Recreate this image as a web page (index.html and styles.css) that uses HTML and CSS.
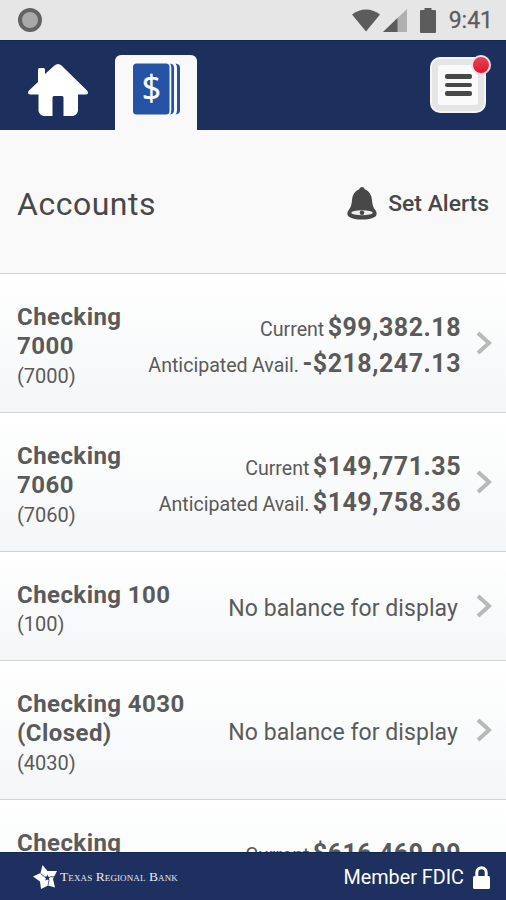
FILE: index.html
```
<!DOCTYPE html>
<html lang="en">

<head>
    <meta charset="UTF-8">
    <meta name="viewport" content="width=device-width, initial-scale=1.0">
    <title>Accounts</title>
    <link rel="stylesheet" href="styles.css">
</head>

<body>
    <div class="phone">
        <!-- status bar -->
        <div class="statusBar">
            <span class="recDot"></span>
            <div class="statusIcons">
                <svg class="wifi" width="30" height="23" viewBox="0 0 30 23"><path d="M1 5.500Q15-4.500 29 5.500L15 22.500z" fill="#5c5c5c"/></svg>
                <svg class="signal" width="24" height="24" viewBox="0 0 24 24"><path d="M0 24L24 1v23z" fill="#b0b0b0"/><path d="M0 24L14.500 10v14z" fill="#5c5c5c"/></svg>
                <svg class="battery" width="16" height="25" viewBox="0 0 16 25"><path d="M4.500 0h7v2H15a1 1 0 0 1 1 1v21a1 1 0 0 1-1 1H1a1 1 0 0 1-1-1V3a1 1 0 0 1 1-1h3.500z" fill="#5c5c5c"/></svg>
                <span class="clock">9:41</span>
            </div>
        </div>

        <!-- tabs -->
        <header class="topNav">
            <a class="homeTab" href="#">
                <svg width="60" height="53" viewBox="0 0 60 53"><path fill="#fff" d="M10 5.500q0-1.500 1.500-1.500h4q1.500 0 1.500 1.500V10L26.500 1.500Q30-1.500 33.500 1.500L59 26.500Q61.500 30 58 30.500H50V47q-1 4-5 5H35.500V33.500q0-1.500-1.500-1.500H26q-1.500 0-1.500 1.500V52H15.500q-4-1-5-5V30.500H2Q-1.500 30 1 26.500L10 18z"/></svg>
            </a>
            <a class="accountTab" href="#">
                <svg width="48" height="52" viewBox="0 0 48 52">
                    <rect x="0" y="0.500" width="36.500" height="51" rx="3.500" fill="#2453a6"/>
                    <path d="M37 0.500Q41 1 41 4.500v43Q41 51 37 51.500Q38.300 50 38.300 47V5Q38.300 2 37 .500zM42.500 0.500Q47 1 47 4.500v43Q47 51 42.500 51.500Q44 50 44 47V5Q44 2 42.500 .500z" fill="#2453a6"/>
                    <text x="18.500" y="37" text-anchor="middle" class="dollar">$</text>
                </svg>
            </a>
            <button class="menuBtn">
                <span class="menuFace"><i></i><i></i><i></i></span>
                <span class="badge"></span>
            </button>
        </header>

        <div class="titleBar">
            <h1>Accounts</h1>
            <a class="alerts" href="#">
                <svg width="30" height="33" viewBox="0 0 30 33">
                    <path fill="#484848" d="M15 0c1.600 0 2.500 1 2.600 2.200C22.500 4 24.500 8 25 13c.4 5 1.200 7.500 3.700 10.500C30 25.500 30 28 28.500 29.500 25 32 20 32.500 15 32.500S5 32 1.500 29.500C0 28 0 25.500 1.300 23.500 3.800 20.500 4.600 18 5 13c.5-5 2.500-9 7.400-10.800C12.500 1 13.400 0 15 0z"/>
                    <ellipse cx="15" cy="25.800" rx="10.800" ry="2.500" fill="#eee"/>
                    <circle cx="15" cy="25.800" r="2.300" fill="#484848"/>
                </svg>
                <span>Set Alerts</span>
            </a>
        </div>

        <!-- account list -->
        <main class="accountList">
            <div class="account">
                <div class="accountName"><h2>Checking 7000</h2><p>(7000)</p></div>
                <div class="balance">
                    <p>Current <b>$99,382.18</b></p>
                    <p>Anticipated Avail. <b>-$218,247.13</b></p>
                </div>
                <svg class="arrow" width="16" height="24" viewBox="0 0 16 24"><path d="M2 2L13 12 2 22"/></svg>
            </div>
            <div class="account">
                <div class="accountName"><h2>Checking 7060</h2><p>(7060)</p></div>
                <div class="balance">
                    <p>Current <b>$149,771.35</b></p>
                    <p>Anticipated Avail. <b>$149,758.36</b></p>
                </div>
                <svg class="arrow" width="16" height="24" viewBox="0 0 16 24"><path d="M2 2L13 12 2 22"/></svg>
            </div>
            <div class="account">
                <div class="accountName wide"><h2>Checking 100</h2><p>(100)</p></div>
                <div class="noBalance">No balance for display</div>
                <svg class="arrow" width="16" height="24" viewBox="0 0 16 24"><path d="M2 2L13 12 2 22"/></svg>
            </div>
            <div class="account">
                <div class="accountName wide"><h2>Checking 4030 (Closed)</h2><p>(4030)</p></div>
                <div class="noBalance">No balance for display</div>
                <svg class="arrow" width="16" height="24" viewBox="0 0 16 24"><path d="M2 2L13 12 2 22"/></svg>
            </div>
            <div class="account cutOff">
                <div class="accountName"><h2>Checking</h2></div>
                <div class="balance">
                    <p>Current <b>$616,469.09</b></p>
                </div>
                <span class="arrow"></span>
            </div>
        </main>

        <footer class="bottomBar">
            <div class="bank">
                <svg width="25" height="24" viewBox="0 0 25 24">
                    <path fill="#fff" d="M9.500 0l5 6H24l-4 8 2 8.500-7-2L8 24l-1-7.500L0 11.500 7.500 8z"/>
                    <path fill="#1e305f" d="M14.500 9.500l.8 2.200h2.500l-2 1.600.6 2.500-2-1.400-2.200 1.400.7-2.500-2-1.700h2.700z"/>
                    <path stroke="#1e305f" stroke-width=".8" d="M17.500 11.700h4.500M16 15.500l-1 5M11.500 11.700L7.500 8.500"/>
                </svg>
                <span class="bankName">Texas Regional Bank</span>
            </div>
            <div class="fdic">
                <span>Member FDIC</span>
                <svg width="17" height="23" viewBox="0 0 17 23"><path d="M3.800 11V6.500a4.700 4.700 0 0 1 9.400 0V11" fill="none" stroke="#fff" stroke-width="3"/><rect x="0" y="10" width="17" height="13" rx="1.500" fill="#fff"/></svg>
            </div>
        </footer>
    </div>
</body>

</html>
```
FILE: styles.css
```
* {
    box-sizing: border-box;
}
body {
    margin: 0;
    font-family: Roboto, "Liberation Sans", sans-serif;
    color: #5a5a5a;
}
h1, h2, p {
    margin: 0;
}
a {
    color: inherit;
    text-decoration: none;
}
svg {
    display: block;
}
.phone {
    width: 506px;
    height: 900px;
    display: flex;
    flex-direction: column;
    overflow: hidden;
    background: #f9f9f9;
}
.statusBar {
    height: 40px;
    flex: none;
    display: flex;
    justify-content: space-between;
    align-items: center;
    padding: 0 13px 0 18px;
    background: #e6e6e6;
}
.recDot {
    width: 24px;
    height: 24px;
    border: 4px solid #636363;
    border-radius: 50%;
    background: #a9a9a9;
}
.statusIcons {
    display: flex;
    align-items: center;
}
.signal {
    margin: 0 13px 0 2px;
}
.clock {
    margin-left: 13px;
    padding-top: 2px;
    font-size: 23px;
    line-height: 38px;
    color: #5c5c5c;
    -webkit-text-stroke: 0.3px #5c5c5c;
}
.topNav {
    height: 90px;
    flex: none;
    display: flex;
    align-items: flex-start;
    padding: 0 20px 0 28px;
    background: #1c2f5d;
    border-top: 1px solid #15264f;
}
.homeTab {
    margin: 23px 27px 0 0;
}
.accountTab {
    width: 82px;
    height: 75px;
    margin-top: 14px;
    padding: 8px 0 0 18px;
    border-radius: 6px 6px 0 0;
    background: #f9f9f9;
}
.dollar {
    font-family: "Open Sans", sans-serif;
    font-size: 34px;
    fill: #fff;
    stroke: #fff;
    stroke-width: 0.3px;
}
.menuBtn {
    position: relative;
    width: 56px;
    height: 56px;
    margin: 16px 0 0 auto;
    padding: 6px;
    border: 2px solid #f6f6f6;
    border-radius: 10px;
    background: #e5e5e5;
}
.menuFace {
    width: 100%;
    height: 100%;
    display: flex;
    flex-direction: column;
    justify-content: center;
    align-items: center;
    gap: 4px;
    border-radius: 3px;
    background: #fafafa;
}
.menuFace i {
    width: 27px;
    height: 4.500px;
    border-radius: 2px;
    background: #484848;
}
.badge {
    position: absolute;
    top: -4px;
    right: -7px;
    width: 20px;
    height: 20px;
    border: 2px solid #f3dfe3;
    border-radius: 50%;
    background: linear-gradient(#e84456, #e0162e);
}
.titleBar {
    height: 143px;
    flex: none;
    display: flex;
    justify-content: space-between;
    align-items: center;
    padding: 4px 17px 0;
}
h1 {
    font-size: 32px;
    font-weight: 400;
    letter-spacing: 0.500px;
    color: #484848;
}
.alerts {
    display: flex;
    align-items: center;
    gap: 11px;
    font-size: 22.900px;
    font-weight: 500;
    color: #484848;
}
.accountList {
    flex: 1;
    min-height: 0;
    overflow: hidden;
}
.account {
    display: flex;
    align-items: center;
    padding: 29px 14px 21px 17px;
    border-top: 1px solid #d0d1d2;
    background: linear-gradient(#fff, #f4f6f7);
}
.accountName {
    width: 120px;
}
.accountName.wide {
    width: 180px;
}
h2 {
    font-size: 24px;
    font-weight: 700;
    line-height: 29.400px;
    letter-spacing: 0.440px;
}
.accountName p {
    font-size: 20px;
    line-height: 29px;
}
.balance {
    flex: 1;
    margin: 3px 0 0 -20px;
    text-align: right;
    white-space: nowrap;
}
.balance p {
    height: 36px;
    font-size: 19.600px;
    line-height: 36px;
    word-spacing: -0.500px;
}
.balance b {
    margin-left: -1px;
    font-size: 25px;
    line-height: 1;
    letter-spacing: 0.520px;
}
.noBalance {
    flex: 1;
    margin: -2px -10px 0;
    padding-right: 13px;
    font-size: 23px;
    letter-spacing: 0.070px;
    text-align: right;
    white-space: nowrap;
}
.arrow {
    flex: none;
    width: 16px;
    margin: -8px 0 0 15px;
    fill: none;
    stroke: #b8b8b8;
    stroke-width: 4px;
}
/* last row runs under the footer */
.cutOff {
    align-items: flex-start;
    height: 139px;
}
.cutOff .balance {
    margin-top: 9px;
}
.bottomBar {
    height: 48px;
    flex: none;
    display: flex;
    justify-content: space-between;
    align-items: center;
    padding: 1px 16px 0 33px;
    border-top: 1px solid #15264f;
    background: #1e305f;
    color: #fff;
}
.bank {
    display: flex;
    align-items: center;
    gap: 2px;
}
.bankName {
    font-family: "Liberation Serif", serif;
    font-size: 13.500px;
    font-variant: small-caps;
    letter-spacing: 0.100px;
    color: #e6e9f2;
}
.fdic {
    display: flex;
    align-items: center;
    gap: 9px;
    font-size: 19.800px;
}
```
